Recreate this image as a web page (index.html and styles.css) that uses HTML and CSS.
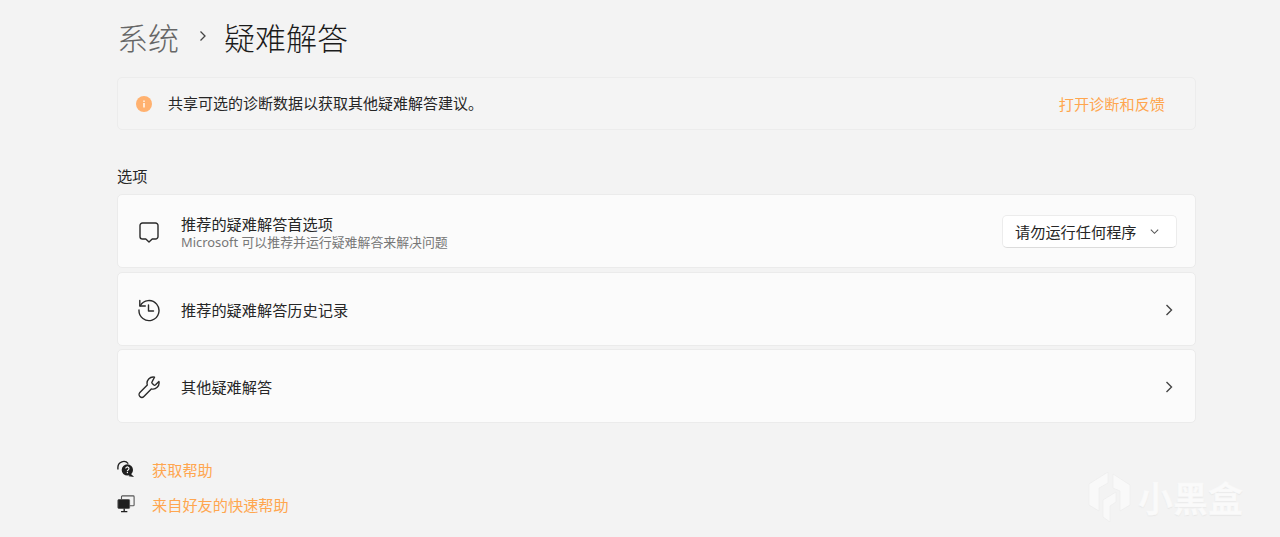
FILE: index.html
```html
<!DOCTYPE html>
<html lang="zh-CN">
<head>
<meta charset="utf-8">
<title>疑难解答</title>
<link rel="stylesheet" href="styles.css">
</head>
<body>
<main class="page">
  <h1 class="title"><span class="crumb">系统</span>
    <svg class="crumb-sep" viewBox="0 0 12 12"><path d="M3.500 1.500 8 6l-4.500 4.500"/></svg>
    <span>疑难解答</span></h1>

  <section class="banner">
    <svg class="info" viewBox="0 0 16 16"><circle cx="8" cy="8" r="8" fill="#ffb16f"/><rect x="7.300" y="7" width="1.400" height="4.500" fill="#fff"/><rect x="7.300" y="4.500" width="1.400" height="1.400" fill="#fff"/></svg>
    <span class="banner-text">共享可选的诊断数据以获取其他疑难解答建议。</span>
    <a class="link banner-link">打开诊断和反馈</a>
  </section>

  <h2 class="section">选项</h2>

  <div class="cards">
    <section class="card">
      <svg class="icon" viewBox="0 0 24 24"><path d="M5.500 3h13A2.500 2.500 0 0 1 21 5.500v11a2.500 2.500 0 0 1-2.500 2.500h-3.300L12 22l-3.200-3H5.500A2.500 2.500 0 0 1 3 16.500v-11A2.500 2.500 0 0 1 5.500 3z"/></svg>
      <div class="card-text card-text-two">
        <div class="card-title">推荐的疑难解答首选项</div>
        <div class="card-sub">Microsoft 可以推荐并运行疑难解答来解决问题</div>
      </div>
      <div class="select"><span class="select-label">请勿运行任何程序</span>
        <svg class="select-chev" viewBox="0 0 12 12"><path d="M2 4l4 4 4-4"/></svg>
      </div>
    </section>
    <section class="card">
      <svg class="icon" viewBox="0 0 24 24"><path d="M3.200 7.800A10 10 0 1 1 2 12"/><path d="M2.800 2.500v5.500h5.500"/><path d="M11.500 7v6h5"/></svg>
      <div class="card-text"><div class="card-title">推荐的疑难解答历史记录</div></div>
      <svg class="chev" viewBox="0 0 12 12"><path d="M3.500 1 8.500 6l-5 5"/></svg>
    </section>
    <section class="card">
      <svg class="icon" viewBox="0 0 24 24"><path d="M17.500 2.200A6.200 6.200 0 0 0 10.300 10L2.900 17.400a2.800 2.800 0 0 0 4 4l7.400-7.500a6.200 6.200 0 0 0 7.600-7.400l-3.300 3.200a1.500 1.500 0 0 1-2 0l-1.300-1.300a1.500 1.500 0 0 1 0-2z"/></svg>
      <div class="card-text"><div class="card-title">其他疑难解答</div></div>
      <svg class="chev" viewBox="0 0 12 12"><path d="M3.500 1 8.500 6l-5 5"/></svg>
    </section>
  </div>

  <div class="helps">
    <a class="help">
      <svg class="help-icon" viewBox="0 0 20 20"><path class="hs" d="M1 10.500V8a6.500 6.500 0 0 1 11.500-4"/><circle cx="11.500" cy="11" r="6.300" fill="#1f1f1f"/><path d="M15 15l4 4-6-1z" fill="#1f1f1f"/><path class="hq" d="M9.700 9.500a1.800 1.800 0 1 1 2.700 1.600c-.6.400-.9.700-.9 1.300"/><rect x="10.900" y="13.300" width="1.300" height="1.300" fill="#fff"/></svg>
      <span class="link">获取帮助</span>
    </a>
    <a class="help">
      <svg class="help-icon" viewBox="0 0 20 20"><rect x="5" y="1" width="14" height="11" rx="1" class="hg"/><rect x="1" y="5" width="13" height="10" rx="1" fill="#1f1f1f" stroke="#555"/><path class="hs" d="M8 15v3M4.500 18.500h7"/></svg>
      <span class="link">来自好友的快速帮助</span>
    </a>
  </div>
</main>

<div class="watermark">
  <svg class="wm-logo" viewBox="0 0 44 50"><path d="M20 0 1 12v21l10 6V16l9-5z"/><path d="M25 2l17 11v20l-10 6V19l-7-3z"/><path d="M15 28l13-8v10l-6 4v16l-7-5z"/></svg>
  <span class="wm-text">小黑盒</span>
</div>
</body>
</html>
```

FILE: styles.css
```css
* { box-sizing: border-box; }
html, body { margin: 0; height: 537px; overflow: hidden; }
body {
  background: #f3f3f3;
  color: #262626;
  font-family: "Noto Sans", "Noto Sans CJK SC", sans-serif;
  font-size: 15.2px;
}
.page { width: 1079px; margin-left: 117px; padding-top: 14px; }
.title {
  display: flex; align-items: center; margin: 0;
  height: 44px;
  font-size: 31px; font-weight: 300; color: #1b1b1b;
  font-family: "Noto Sans CJK SC", sans-serif;
}
.crumb { color: #666; }
.crumb-sep { width: 12px; height: 12px; margin: 0 15px 0 18px; fill: none; stroke: #444; stroke-width: 1.300; }
.banner {
  display: flex; align-items: center;
  height: 53px; margin-top: 19px;
  padding: 0 30px 0 18px;
  background: #f4f4f4; border: 1px solid #ececec; border-radius: 5px;
}
.info { width: 16px; height: 16px; margin-right: 16px; }
.banner-text { flex: 1; font-size: 15px; padding-bottom: 2px; }
.banner-link { padding-bottom: 2px; }
.link { color: #ffa64f; font-family: "Noto Sans CJK SC", sans-serif; }
.section { margin: 36px 0 8px; height: 20px; line-height: 20px; font-size: 15.2px; font-weight: 400; }
.cards { display: flex; flex-direction: column; gap: 3.500px; }
.card {
  display: flex; align-items: center;
  height: 74px; padding: 0 17px 0 19px;
  background: #fbfbfb; border: 1px solid #ebebeb; border-radius: 5px;
}
.icon { width: 24px; height: 24px; margin: 2px 20px 0 0; fill: none; stroke: #2a2a2a; stroke-width: 1.400; stroke-linejoin: round; stroke-linecap: round; }
.card-text { flex: 1; padding-top: 2px; }
.card-text-two { padding-top: 4px; }
.card-title { line-height: 18px; }
.card-sub { font-size: 12.9px; line-height: 17px; margin-top: 1px; color: #777; }
.chev { width: 12px; height: 12px; margin: 2px 3px 0 0; fill: none; stroke: #444; stroke-width: 1.400; }
.select {
  display: flex; align-items: center; justify-content: space-between;
  width: 175px; height: 33px; margin: 1px 1px 0 0; padding: 0 16px 0 12px;
  background: #fff; border: 1px solid #ececec; border-bottom-color: #dcdcdc; border-radius: 5px;
  font-family: "Noto Sans CJK SC", sans-serif;
}
.select-label { padding-bottom: 2px; }
.select-chev { width: 11px; height: 11px; fill: none; stroke: #555; stroke-width: 1.100; }
.helps { display: flex; flex-direction: column; gap: 15px; margin-top: 36px; }
.help { display: flex; align-items: center; height: 20px; gap: 17px; }
.help-icon { width: 18px; height: 18px; flex: none; }
.hs { fill: none; stroke: #1f1f1f; stroke-width: 1.500; }
.hg { fill: none; stroke: #555; stroke-width: 1.200; }
.hq { fill: none; stroke: #fff; stroke-width: 1.300; }
.watermark {
  position: absolute; left: 1088px; top: 472px;
  display: flex; align-items: flex-start; gap: 6px;
}
.wm-logo { width: 44px; height: 50px; fill: #f9f9f9; stroke: #e8e8e8; stroke-width: .5; }
.wm-text {
  font-family: "Noto Sans CJK SC", sans-serif; font-weight: 700; font-size: 35px; line-height: 50px; letter-spacing: 0;
  color: #fafafa; -webkit-text-stroke: .3px #f9f9f9; text-shadow: 0 1px 1px #e6e6e6;
}
```
